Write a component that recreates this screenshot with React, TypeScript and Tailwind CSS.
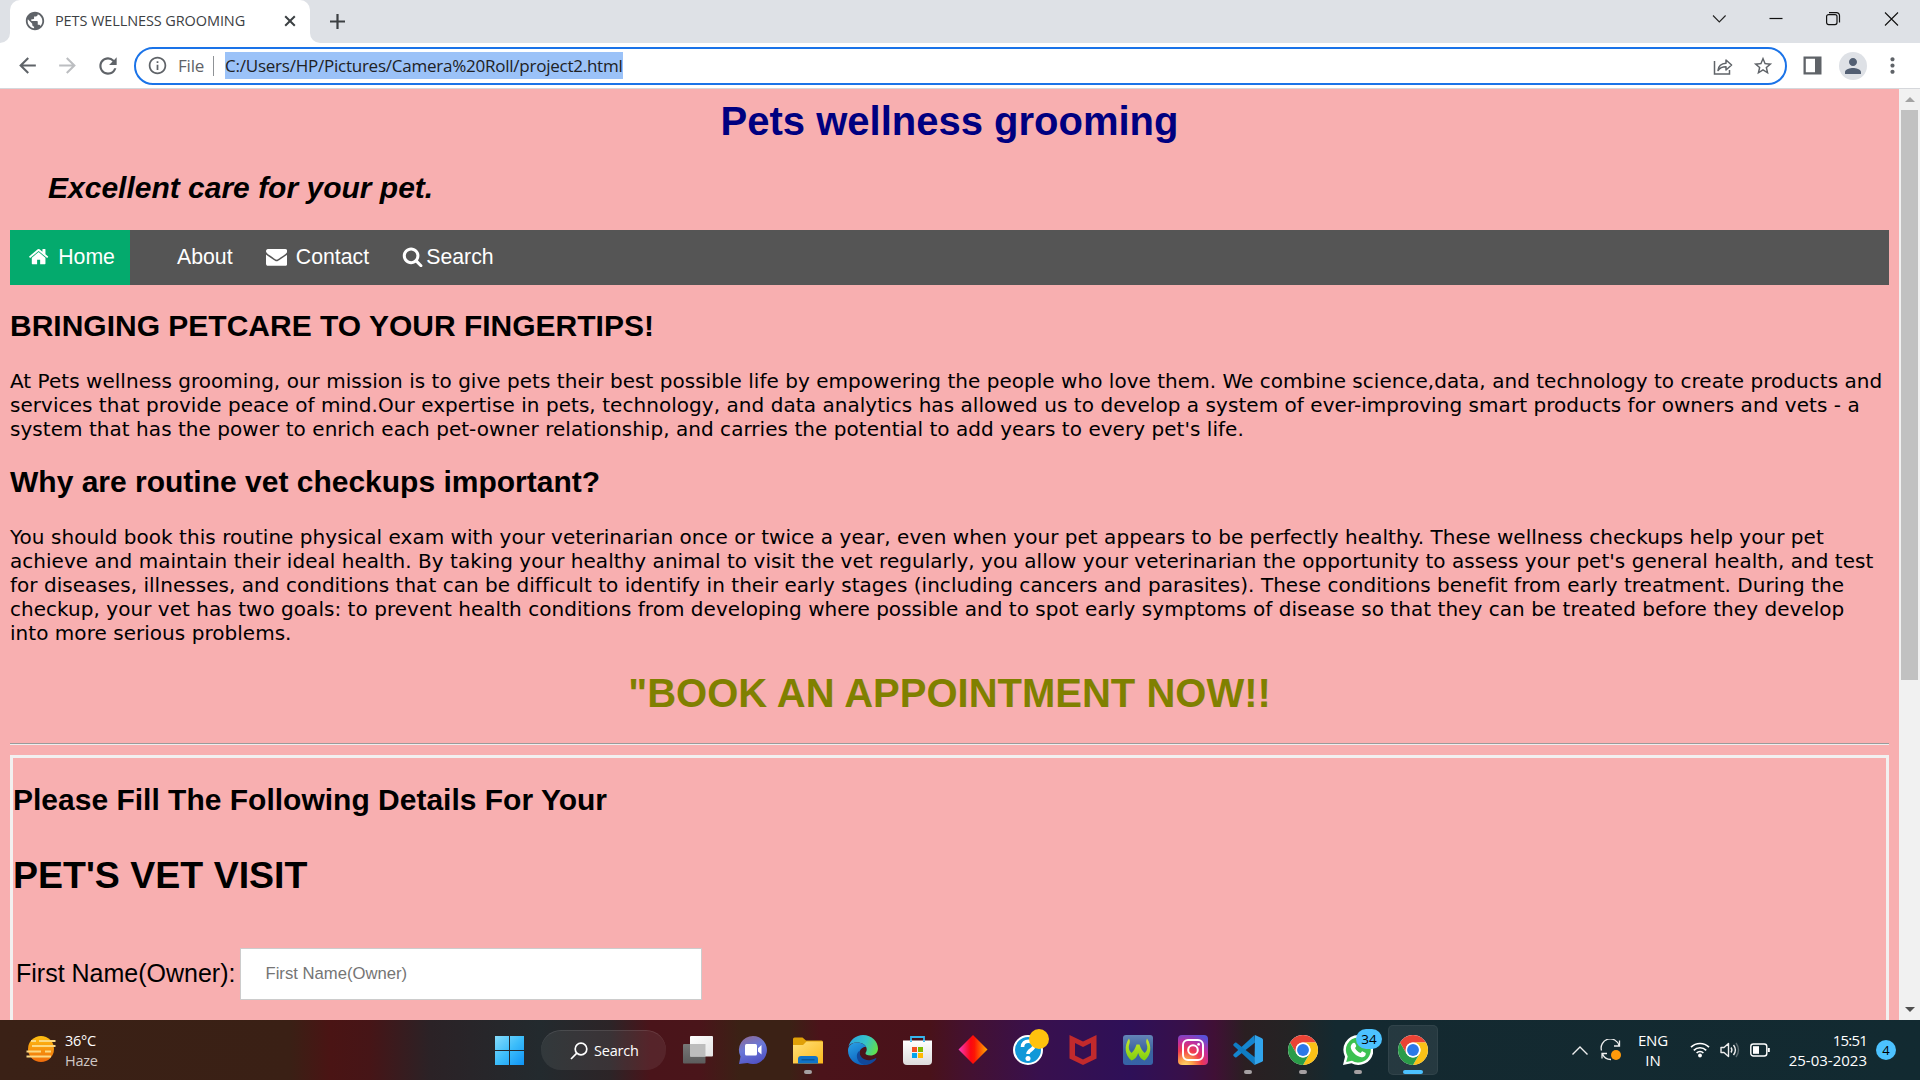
import React from "react";
import { MdArrowBack, MdArrowForward, MdRefresh, MdInfoOutline, MdStarBorder, MdMoreVert, MdPublic, MdPerson } from "react-icons/md";

const HOME =
  "M1472 992v480q0 26-19 45t-45 19h-384v-384h-256v384h-384q-26 0-45-19t-19-45v-480q0-1 .5-3t.5-3l575-474 575 474q1 2 1 6zm223-69l-62 74q-8 9-21 11h-3q-13 0-21-7l-692-577-692 577q-12 8-24 7-13-2-21-11l-62-74q-8-10-7-23.5t11-21.5l719-599q32-26 76-26t76 26l244 204v-195q0-14 9-23t23-9h192q14 0 23 9t9 23v408l219 182q10 8 11 21.5t-7 23.5z";
const ENVELOPE =
  "M1792 710v794q0 66-47 113t-113 47h-1472q-66 0-113-47t-47-113v-794q44 49 101 87 362 246 497 345 57 42 92.5 65.5t94.5 48 110 24.5h2q51 0 110-24.5t94.5-48 92.5-65.5q170-123 498-345 57-39 100-87zm0-294q0 79-49 151t-122 123q-376 261-468 325-10 7-42.5 31t-54 38.5-52 32.5-57.5 27-50 9h-2q-23 0-50-9t-57.5-27-52-32.5-54-38.5-42.5-31q-91-64-262-182.5t-205-142.5q-62-42-117-115.5t-55-136.5q0-78 41.5-130t118.5-52h1472q65 0 112.5 47t47.5 113z";
const SEARCH =
  "M1216 832q0-185-131.5-316.5t-316.5-131.5-316.5 131.5-131.5 316.5 131.5 316.5 316.5 131.5 316.5-131.5 131.5-316.5zm512 832q0 52-38 90t-90 38q-54 0-90-38l-343-342q-179 124-399 124-143 0-273.5-55.5t-225-150-150-225-55.5-273.5 55.5-273.5 150-225 225-150 273.5-55.5 273.5 55.5 225 150 150 225 55.5 273.5q0 220-124 399l343 343q37 37 37 90z";

function NavIcon({ d }: { d: string }) {
  return (
    <svg className="mt-[1px] size-[21.25px] shrink-0" viewBox="0 0 1792 1792" fill="white">
      <path d={d} />
    </svg>
  );
}

function TabStrip() {
  return (
    <div className="flex h-[43px] bg-[#dee1e6]">
      <div className="size-[10px] self-end bg-white">
        <div className="size-full rounded-br-[10px] bg-[#dee1e6]" />
      </div>
      <div className="flex w-[300px] items-center rounded-t-[10px] bg-white pb-[1px] pl-[14px]">
        <MdPublic className="size-[22px] text-[#5f6368]" />
        <span className="ml-[9px] w-[229px] whitespace-nowrap text-[14.5px] leading-5 tracking-[-0.1px] text-[#3c4043]">
          PETS WELLNESS GROOMING
        </span>
        <svg className="size-[12px]" viewBox="0 0 12 12" stroke="#3c4043" strokeWidth="2">
          <path d="M1.2 1.2 10.8 10.8M10.8 1.2 1.2 10.8" />
        </svg>
      </div>
      <div className="size-[10px] self-end bg-white">
        <div className="size-full rounded-bl-[10px] bg-[#dee1e6]" />
      </div>
      <svg className="mt-[13px] ml-[9px] size-[17px]" viewBox="0 0 17 17" stroke="#3c4043" strokeWidth="2.2">
        <path d="M8.5 1v15M1 8.5h15" />
      </svg>
      <div className="mt-[10px] ml-auto flex items-start pr-[20px]">
        <svg className="mr-[39px] size-[18px]" viewBox="0 0 18 18" fill="none" stroke="#222" strokeWidth="1.1">
          <path d="M3 5.5 9.3 12 15.6 5.5" />
        </svg>
        <svg className="mr-[39px] size-[18px]" viewBox="0 0 18 18" stroke="#111" strokeWidth="1.2">
          <path d="M2.5 8.5h13" />
        </svg>
        <svg className="mr-[40px] size-[18px]" viewBox="0 0 18 18" fill="none" stroke="#111" strokeWidth="1.2">
          <rect x="2.6" y="4.6" width="10.4" height="10" rx="2" />
          <path d="M5 2.6h7.5a3 3 0 0 1 3 3v7" />
        </svg>
        <svg className="size-[18px]" viewBox="0 0 18 18" stroke="#111" strokeWidth="1.1">
          <path d="M3 2.5 16 15.5M16 2.5 3 15.5" />
        </svg>
      </div>
    </div>
  );
}

function Toolbar() {
  return (
    <div className="flex h-[46px] items-center border-b border-[#d5d7db] bg-white text-[#5f6368]">
      <MdArrowBack className="ml-[15px] size-[25px]" />
      <MdArrowForward className="ml-[15px] size-[25px] text-[#bcbec1]" />
      <MdRefresh className="ml-[15px] size-[26px]" />
      <div className="ml-[13px] flex h-[38px] w-[1653px] items-center rounded-full border-[2.5px] border-[#1a73e8] pl-[11px]">
        <MdInfoOutline className="size-[21px]" />
        <span className="ml-[10px] text-[17px] tracking-[-0.2px]">File</span>
        <span className="ml-[9px] h-[20px] w-px bg-[#8f9296]" />
        <span className="ml-[11px] h-[27px] w-[398px] bg-[#9bc2f8] text-[17px] leading-[27px] tracking-[-0.24px] whitespace-nowrap text-[#202124]">
          C:/Users/HP/Pictures/Camera%20Roll/project2.html
        </span>
        <svg className="ml-auto size-[20px]" viewBox="0 0 20 20" fill="none" stroke="#5f6368" strokeWidth="1.5">
          <path d="M1.5 5v13h15v-4" />
          <path d="M5 14.500c.5-5 3.500-7 8-7.200V4l5.600 5L13 14v-3.300c-3.500 0-6 .8-8 3.800z" strokeLinejoin="round" />
        </svg>
        <MdStarBorder className="mr-[11px] ml-[19px] size-[22px]" />
      </div>
      <svg className="ml-[16px] size-[19px]" viewBox="0 0 19 19" fill="#5f6368">
        <path fillRule="evenodd" d="M.5.5h18v18H.500zM2.800 2.800v13.400h9.200V2.800z" />
      </svg>
      <div className="ml-[17px] flex size-[28px] items-center justify-center rounded-full bg-[#dee1e6]">
        <MdPerson className="size-[24px] text-[#525f73]" />
      </div>
      <MdMoreVert className="ml-[13px] size-[25px]" />
    </div>
  );
}

function WebPage() {
  return (
    <div className="h-full w-[1899px] overflow-hidden bg-[#f8afb0] px-[10px] pt-[10px] text-black">
      <h1 className="text-center text-[40px] leading-[45px] font-bold text-[#000080]">Pets wellness grooming</h1>
      <h2 className="mt-[27px] pl-[38px] text-[30px] leading-[34px] font-bold italic">Excellent care for your pet.</h2>
      <nav className="mt-[25px] flex h-[55px] bg-[#555] text-[21.25px] leading-[24px] whitespace-nowrap text-white">
        <div className="flex w-[120px] bg-[#04aa6d] pt-[15px] pl-[18px]">
          <NavIcon d={HOME} />
          <span className="ml-[9px]">Home</span>
        </div>
        <span className="ml-[47px] pt-[15px]">About</span>
        <div className="ml-[33px] flex pt-[15px]">
          <NavIcon d={ENVELOPE} />
          <span className="ml-[9px]">Contact</span>
        </div>
        <div className="ml-[33px] flex pt-[15px]">
          <NavIcon d={SEARCH} />
          <span className="ml-[3px]">Search</span>
        </div>
      </nav>
      <h2 className="mt-[24px] text-[30px] leading-[34px] font-bold">BRINGING PETCARE TO YOUR FINGERTIPS!</h2>
      <p className="mt-[26px] font-['DejaVu_Sans',sans-serif] text-[20px] leading-[24px] tracking-[0.04px] whitespace-nowrap">
        <span className="tracking-[0.03px]">
          At Pets wellness grooming, our mission is to give pets their best possible life by empowering the people who love them. We combine science,data, and technology to create products and
        </span>
        <br />
        <span className="tracking-[0.05px]">
          services that provide peace of mind.Our expertise in pets, technology, and data analytics has allowed us to develop a system of ever-improving smart products for owners and vets - a
        </span>
        <br />
        system that has the power to enrich each pet-owner relationship, and carries the potential to add years to every pet's life.
      </p>
      <h2 className="mt-[24px] text-[30px] leading-[34px] font-bold">Why are routine vet checkups important?</h2>
      <p className="mt-[26px] font-['DejaVu_Sans',sans-serif] text-[20px] leading-[24px] tracking-[0.035px] whitespace-nowrap">
        You should book this routine physical exam with your veterinarian once or twice a year, even when your pet appears to be perfectly healthy. These wellness checkups help your pet
        <br />
        achieve and maintain their ideal health. By taking your healthy animal to visit the vet regularly, you allow your veterinarian the opportunity to assess your pet's general health, and test
        <br />
        for diseases, illnesses, and conditions that can be difficult to identify in their early stages (including cancers and parasites). These conditions benefit from early treatment. During the
        <br />
        checkup, your vet has two goals: to prevent health conditions from developing where possible and to spot early symptoms of disease so that they can be treated before they develop
        <br />
        into more serious problems.
      </p>
      <h1 className="mt-[26px] text-center text-[40px] leading-[45px] font-bold text-[#808000]">"BOOK AN APPOINTMENT NOW!!</h1>
      <div className="mt-[27px] h-[2px] border-t border-b border-t-[#9a9a9a] border-b-[#eee]" />
      <div className="mt-[10px] h-[400px] border-[3px] border-[#f2f0f0]">
        <h2 className="mt-[25px] text-[30px] leading-[34px] font-bold">Please Fill The Following Details For Your</h2>
        <h1 className="mt-[37px] text-[37.5px] leading-[43px] font-bold">PET'S VET VISIT</h1>
        <div className="mt-[51px] flex items-center pl-[3px]">
          <label className="w-[223.5px] text-[25px] whitespace-nowrap">First Name(Owner):</label>
          <input
            className="h-[52px] w-[462px] border border-[#ccc] bg-white px-[25px] text-[16.67px] placeholder:text-[#757575]"
            placeholder="First Name(Owner)"
          />
        </div>
      </div>
    </div>
  );
}

function Scrollbar() {
  return (
    <div className="flex h-full w-[21px] flex-col items-center bg-[#f1f1f1]">
      <div className="flex h-[21px] items-center">
        <div className="border-x-[5px] border-b-[5px] border-x-transparent border-b-[#a3a3a3]" />
      </div>
      <div className="h-[570px] w-[17px] bg-[#c1c1c1]" />
      <div className="mt-auto flex h-[21px] items-center">
        <div className="border-x-[5px] border-t-[5px] border-x-transparent border-t-[#505050]" />
      </div>
    </div>
  );
}

function ChromeIcon() {
  return (
    <svg className="size-[30px]" viewBox="0 0 48 48">
      <circle cx="24" cy="24" r="24" fill="#fff" />
      <path d="M3.220 12A24 24 0 0 1 44.780 12H24A12 12 0 0 0 13.610 18L13.600 30z" fill="#ea4335" />
      <path d="M44.780 12A24 24 0 0 1 24 48L34.390 30A12 12 0 0 0 34.400 18 12 12 0 0 0 24 12z" fill="#fbc116" />
      <path d="M24 48A24 24 0 0 1 3.220 12L13.610 30A12 12 0 0 0 34.390 30z" fill="#2a9c48" />
      <circle cx="24" cy="24" r="12" fill="#fff" />
      <circle cx="24" cy="24" r="9.500" fill="#2b78e8" />
    </svg>
  );
}

const ICON = "size-[30px]";

function TaskView() {
  return (
    <svg className={ICON} viewBox="0 0 30 30">
      <defs>
        <linearGradient id="tv1" x1="0" y1="0" x2="1" y2="1"><stop offset="0" stopColor="#fff" /><stop offset="1" stopColor="#e4e4e4" /></linearGradient>
        <linearGradient id="tv2" x1="0" y1="0" x2="0" y2="1"><stop offset="0" stopColor="#777" /><stop offset="1" stopColor="#5c5c5c" /></linearGradient>
      </defs>
      <rect x="0" y="9" width="22.500" height="19.500" rx="1" fill="url(#tv2)" />
      <rect x="7" y="1" width="23" height="20.500" rx="1" fill="url(#tv1)" />
      <rect x="7" y="9" width="15.500" height="12.500" fill="#bdbdbd" />
    </svg>
  );
}

function Chat() {
  return (
    <svg className={ICON} viewBox="0 0 30 30">
      <defs>
        <linearGradient id="ch" x1=".2" y1="0" x2=".6" y2="1"><stop offset="0" stopColor="#8d6a96" /><stop offset=".45" stopColor="#6a78d8" /><stop offset="1" stopColor="#5152c4" /></linearGradient>
      </defs>
      <path d="M15 1a14 14 0 1 1-5.500 26.900L1 29l1.500-7.500A14 14 0 0 1 15 1z" fill="url(#ch)" />
      <rect x="7" y="9" width="12" height="11.500" rx="1.500" fill="#fff" />
      <path d="M20 13.200 23.500 10v9.500L20 16.500z" fill="#fff" />
    </svg>
  );
}

function Explorer() {
  return (
    <svg className={ICON} viewBox="0 0 30 30">
      <defs>
        <linearGradient id="ex" x1="0" y1="0" x2="1" y2="1"><stop offset="0" stopColor="#ffe07a" /><stop offset="1" stopColor="#fbb91c" /></linearGradient>
      </defs>
      <path d="M0 4a1.500 1.500 0 0 1 1.500-1.500h8L13 5.500h15.500A1.500 1.500 0 0 1 30 7v4H0z" fill="#e0a008" />
      <path d="M0 10h10l3.500-3.500H29a1 1 0 0 1 1 1V28.500H0z" fill="url(#ex)" />
      <path d="M5 28.500V24a3 3 0 0 1 3-3h14a3 3 0 0 1 3 3v4.500z" fill="#0f73c8" />
      <path d="M8.500 24.800h13" stroke="#08518f" strokeWidth="1.200" />
    </svg>
  );
}

function Edge() {
  return (
    <svg className={ICON} viewBox="0 0 30 30">
      <defs>
        <linearGradient id="e1" x1="0" y1=".3" x2="1" y2=".6"><stop offset="0" stopColor="#2aa5e0" /><stop offset=".55" stopColor="#36c4c8" /><stop offset="1" stopColor="#62e04a" /></linearGradient>
        <linearGradient id="e2" x1="0" y1="0" x2=".5" y2="1"><stop offset="0" stopColor="#2aa2e6" /><stop offset="1" stopColor="#0d62bd" /></linearGradient>
      </defs>
      <path d="M.5 11.500C2 5 8 0 15 0c9 0 15 6.500 15 13.500 0 4.500-3.500 7-7.500 7-3.500 0-5.300-1.300-5-2.500.8-1.300 1.200-2.300 1.200-3.700C18.700 10 14 7.500 9 7.500 5 7.500 2 9 .5 11.500z" fill="url(#e1)" />
      <path d="M9 7.500c5 0 8.500 2.500 9.300 5-1.500-1.300-7 .5-6.800 6.500.2 5 5 9.500 10 8-2 2-4.500 3-6.500 3C6.500 30 0 23.500 0 15.500 0 10.500 4 7.500 9 7.500z" fill="url(#e2)" />
      <path d="M11.700 15.500c-1 7 5.300 10.500 11 9.500 2.500-.5 4-1.500 5.300-2 .500.300.3.800 0 1.200-2.500 4-7.500 5.800-11.500 5.800-8-2-10-11-4.800-14.500z" fill="#11489b" />
    </svg>
  );
}

function Store() {
  return (
    <svg className={ICON} viewBox="0 0 30 30">
      <defs><linearGradient id="st" x1="0" y1="0" x2="0" y2="1"><stop offset="0" stopColor="#fff" /><stop offset="1" stopColor="#dcdcdc" /></linearGradient></defs>
      <path d="M8 6.500V2h13v4.500" fill="none" stroke="#35b6ee" strokeWidth="1.800" />
      <path d="M0 5.500h29V26a4 4 0 0 1-4 4H4a4 4 0 0 1-4-4z" fill="url(#st)" />
      <rect x="9" y="12" width="5" height="5" fill="#f25022" />
      <rect x="15" y="12" width="5" height="5" fill="#7fba00" />
      <rect x="9" y="18" width="5" height="5" fill="#00a4ef" />
      <rect x="15" y="18" width="5" height="5" fill="#ffb900" />
      <path d="M7.100 5.500V7h1.800V5.500zM20.100 5.500V7h1.800V5.500z" fill="#35b6ee" />
    </svg>
  );
}

function Diamond() {
  return (
    <svg className={ICON} viewBox="0 0 30 30">
      <defs><linearGradient id="di" x1="0" y1="0" x2="1" y2="0"><stop offset="0" stopColor="#f53cc0" /><stop offset=".42" stopColor="#fb0712" /><stop offset=".55" stopColor="#fc1505" /><stop offset="1" stopColor="#ffae00" /></linearGradient></defs>
      <path d="M15 0 29.500 14.500 15 29 .5 14.500z" fill="url(#di)" />
    </svg>
  );
}

function HelpIcon() {
  return (
    <div className="relative size-[30px]">
      <svg className={ICON} viewBox="0 0 30 30">
        <circle cx="15" cy="15" r="14" fill="#1098d8" stroke="#fff" strokeWidth="2" />
        <path d="M9.500 12c0-8 11.500-7 11.500-1.500 0 4.500-6 4.500-6 8.500" fill="none" stroke="#fff" strokeWidth="3.600" />
        <circle cx="15" cy="23.500" r="2.500" fill="#fff" />
      </svg>
      <div className="absolute -top-[6px] left-[16px] size-[20px] rounded-full bg-[#ffc20e]" />
    </div>
  );
}

function McAfee() {
  return (
    <svg className={ICON} viewBox="0 0 30 30">
      <path fillRule="evenodd" d="M1.500 0 15 6.500 28.500 0V23.500L15 30 1.500 23.500zM7 8v12.500l8 4 8-4V8l-8 4z" fill="#c22a2c" />
    </svg>
  );
}

function WIcon() {
  return (
    <svg className={ICON} viewBox="0 0 30 30">
      <defs>
        <linearGradient id="wb" x1="0" y1="0" x2="0" y2="1"><stop offset="0" stopColor="#6385b8" /><stop offset=".5" stopColor="#3c639f" /><stop offset="1" stopColor="#3564a8" /></linearGradient>
        <linearGradient id="wg" x1="0" y1="0" x2="0" y2="1"><stop offset="0" stopColor="#c8e82a" /><stop offset="1" stopColor="#7fcf10" /></linearGradient>
      </defs>
      <rect width="30" height="30" rx="3" fill="url(#wb)" />
      <path d="M6 3.500C1 11 1.500 20 8.500 25.500c3-1 5.500-3.500 6.700-7.500 1 4 3.500 6.500 6.300 7.500C28.500 20 29 11 24 3.500c-1 2-1 3.500-.5 5 1.500 4 1 7-1.700 9.500C19.500 16.500 17.500 13 16.500 9.500h-3C12.500 13 10.500 16.500 8.500 18 6 15.500 5 12.500 6.500 8.500c.5-1.500.5-3-.5-5z" fill="url(#wg)" />
    </svg>
  );
}

function Instagram() {
  return (
    <svg className={ICON} viewBox="0 0 30 30">
      <defs>
        <radialGradient id="ig" cx=".25" cy="1.050" r="1.150"><stop offset="0" stopColor="#ffe070" /><stop offset=".22" stopColor="#fca24a" /><stop offset=".48" stopColor="#f0394f" /><stop offset=".72" stopColor="#c32e9c" /><stop offset="1" stopColor="#5a50d8" /></radialGradient>
      </defs>
      <rect width="30" height="30" rx="4" fill="url(#ig)" />
      <rect x="5" y="5" width="20" height="20" rx="5" fill="none" stroke="#fff" strokeWidth="2" />
      <circle cx="15" cy="15" r="4.800" fill="none" stroke="#fff" strokeWidth="2" />
      <circle cx="20.600" cy="9.400" r="1.400" fill="#fff" />
    </svg>
  );
}

function VsCode() {
  return (
    <svg className={ICON} viewBox="0 0 30 30">
      <path d="M22 7.500 3.500 22.300c-.5.400-1 .4-1.500 0L.6 21c-.5-.500-.5-1.200 0-1.700L21.500 0z" fill="#1585cf" />
      <path d="M22 22.500 3.500 7.700c-.5-.4-1-.4-1.500 0L.6 9c-.5.500-.5 1.200 0 1.700L21.500 30z" fill="#0f7cc4" />
      <path d="M21.500 30 22 0l7 3.200c.6.300 1 .9 1 1.600v20.400c0 .700-.4 1.300-1 1.600z" fill="#31a4ec" />
    </svg>
  );
}

function WhatsApp() {
  return (
    <div className="relative size-[30px]">
      <svg className={ICON} viewBox="0 0 30 30">
        <path d="M15 0a15 15 0 1 1-6.500 28.300L0 30l2-8.200A15 15 0 0 1 15 0z" fill="#fff" />
        <path d="M15 2.500a12.500 12.500 0 1 1-6 23.300L3.200 27l1.500-5.500A12.500 12.500 0 0 1 15 2.500z" fill="#3cc151" />
        <path d="M10.300 8c1.500-.700 2 .4 2.900 2.800.2.800-.700 1.600-1.200 2.300 1.300 2.600 3 4 5.500 5 1-.9 1.400-2 2.200-1.700l3 1.500c.3 3-1.700 4.300-4.200 4.300-5-.5-10.500-5.800-10.800-10.200.1-1.800 1.300-3.600 2.600-4z" fill="#fff" />
      </svg>
      <div className="absolute -top-[6px] left-[13px] flex h-[20px] w-[26px] items-center justify-center rounded-full bg-[#4cc2ff] font-['Open_Sans',sans-serif] text-[13.5px] text-black">
        34
      </div>
    </div>
  );
}

function Cell({ children, mark }: { children: React.ReactNode; mark?: boolean }) {
  return (
    <div className="flex h-[60px] w-[55px] shrink-0 flex-col items-center pt-[15px]">
      {children}
      {mark && <div className="mt-[5px] h-[4px] w-[8px] rounded-full bg-[#a5a0a2]" />}
    </div>
  );
}

function Taskbar() {
  return (
    <div className="flex h-[60px] bg-[linear-gradient(90deg,#3a2116_0px,#3a2015_290px,#4a1414_330px,#461517_370px,#2b2226_430px,#232a2e_540px,#2c2427_610px,#4a141a_650px,#4a151a_700px,#3b2115_740px,#3b2115_790px,#4b131a_820px,#49121a_930px,#44112f_965px,#38104e_1040px,#2e1058_1130px,#381049_1185px,#401035_1215px,#2a1f22_1245px,#242324_1290px,#142930_1335px,#122a31_1920px)] text-white">
      <div className="flex w-[482px] pl-[26px]">
        <svg className="mt-[15px] size-[30px]" viewBox="0 0 30 30" fill="none">
          <defs><linearGradient id="sun" x1="0" y1="0" x2="0" y2="1"><stop offset="0" stopColor="#ffc012" /><stop offset="1" stopColor="#ef6c0c" /></linearGradient></defs>
          <circle cx="15" cy="14" r="13" fill="url(#sun)" />
          <path d="M5 6h5M13 6h16.500M6 11h23.500M.500 16.500H15M19 16.500h6M.500 21.500H25" stroke="#fcd982" strokeWidth="2.200" />
        </svg>
        <div className="mt-[11px] ml-[9px] text-[14.5px] leading-[20px] tracking-[-0.3px]">
          <div>36°C</div>
          <div className="text-[#cfc7c4]">Haze</div>
        </div>
      </div>
      <div className="flex w-[55px] justify-center pt-[16px]">
        <svg className="size-[29px]" viewBox="0 0 29 29">
          <defs><linearGradient id="win" x1="0" y1="0" x2="1" y2="1"><stop offset="0" stopColor="#86dcfb" /><stop offset=".5" stopColor="#3cbdfa" /><stop offset="1" stopColor="#0f93f5" /></linearGradient></defs>
          <path d="M0 0h14v14H0zM15 0h14v14H15zM0 15h14v14H0zM15 15h14v14H15z" fill="url(#win)" />
        </svg>
      </div>
      <div className="mt-[10px] ml-[4px] flex h-[40px] w-[125px] items-center rounded-full border-t border-white/10 bg-white/[0.07] pl-[29px]">
        <svg className="size-[18px]" viewBox="0 0 18 18" fill="none" stroke="#fff" strokeWidth="1.700">
          <circle cx="11" cy="7" r="5.800" />
          <path d="M6.800 11.200 1 17" />
        </svg>
        <span className="ml-[6px] text-[14.5px] tracking-[-0.2px]">Search</span>
      </div>
      <div className="ml-[4.500px] flex">
        <Cell><TaskView /></Cell>
        <Cell><Chat /></Cell>
        <Cell mark><Explorer /></Cell>
        <Cell><Edge /></Cell>
        <Cell><Store /></Cell>
        <Cell><Diamond /></Cell>
        <Cell><HelpIcon /></Cell>
        <Cell><McAfee /></Cell>
        <Cell><WIcon /></Cell>
        <Cell><Instagram /></Cell>
        <Cell mark><VsCode /></Cell>
        <Cell mark><ChromeIcon /></Cell>
        <Cell mark><WhatsApp /></Cell>
        <div className="mt-[5px] ml-[2.500px] flex h-[50px] w-[50px] flex-col items-center rounded-[5px] border border-white/5 bg-white/[0.08] pt-[9px]">
          <ChromeIcon />
          <div className="mt-[5px] h-[4px] w-[20px] rounded-full bg-[#4cc2ff]" />
        </div>
      </div>
      <div className="ml-auto flex items-center text-[15px] leading-[20px]">
        <svg className="size-[18px]" viewBox="0 0 18 18" fill="none" stroke="#eee" strokeWidth="1.400"><path d="M1.500 13.500 9 6l7.500 7.500" /></svg>
        <svg className="ml-[11px] size-[22px]" viewBox="0 0 22 22" fill="none" stroke="#eee" strokeWidth="1.300">
          <path d="M1.500 11.500A9 9 0 0 1 19 6.500M19.500 1.500v5.500h-5.500M11 20.500a9 9 0 0 1-8.500-5.500M2 19.500V14.500h5" />
          <circle cx="16" cy="16" r="5" fill="#ff9a0a" stroke="none" />
        </svg>
        <div className="ml-[14px] w-[34px] text-center tracking-[-0.1px]">ENG<br />IN</div>
        <svg className="ml-[20px] size-[20px]" viewBox="0 0 20 20" fill="none" stroke="#fff" strokeWidth="1.700">
          <path d="M1 7.200a12.800 12.800 0 0 1 18 0M3.800 10.300a8.800 8.800 0 0 1 12.400 0M6.600 13a5 5 0 0 1 6.800 0" />
          <circle cx="10" cy="15.500" r="1.900" fill="#fff" stroke="none" />
        </svg>
        <svg className="ml-[10px] size-[20px]" viewBox="0 0 20 20" fill="none" stroke="#eee" strokeWidth="1.400">
          <path d="M1 7.500h3L8.500 3.500v13L4 12.500H1z" strokeLinejoin="round" />
          <path d="M11 7.500q1.800 2.500 0 5M13.500 5q3.800 5 0 10" />
          <path d="M16 3q5 7 0 14" stroke="#5b6a6f" />
        </svg>
        <svg className="ml-[10px] size-[20px]" viewBox="0 0 20 20" fill="none" stroke="#fff" strokeWidth="1.400">
          <rect x=".8" y="4" width="16" height="12" rx="2.500" />
          <rect x="3" y="6.200" width="6" height="7.600" fill="#fff" stroke="none" />
          <path d="M18.800 8v4" strokeWidth="2" />
        </svg>
        <div className="ml-[18px] w-[79px] text-right whitespace-nowrap">
          <div className="-mt-[1px] tracking-[-0.8px]">15:51</div>
          <div>25-03-2023</div>
        </div>
        <div className="mr-[24px] ml-[9px] flex size-[20px] items-center justify-center rounded-full bg-[#4cc2ff] text-[13px] text-black">4</div>
      </div>
    </div>
  );
}

export default function App() {
  return (
    <div className="flex h-[1080px] w-[1920px] flex-col overflow-hidden bg-white font-['Open_Sans',sans-serif]">
      <TabStrip />
      <Toolbar />
      <div className="flex h-[931px] font-['Liberation_Sans',sans-serif]">
        <WebPage />
        <Scrollbar />
      </div>
      <Taskbar />
    </div>
  );
}
